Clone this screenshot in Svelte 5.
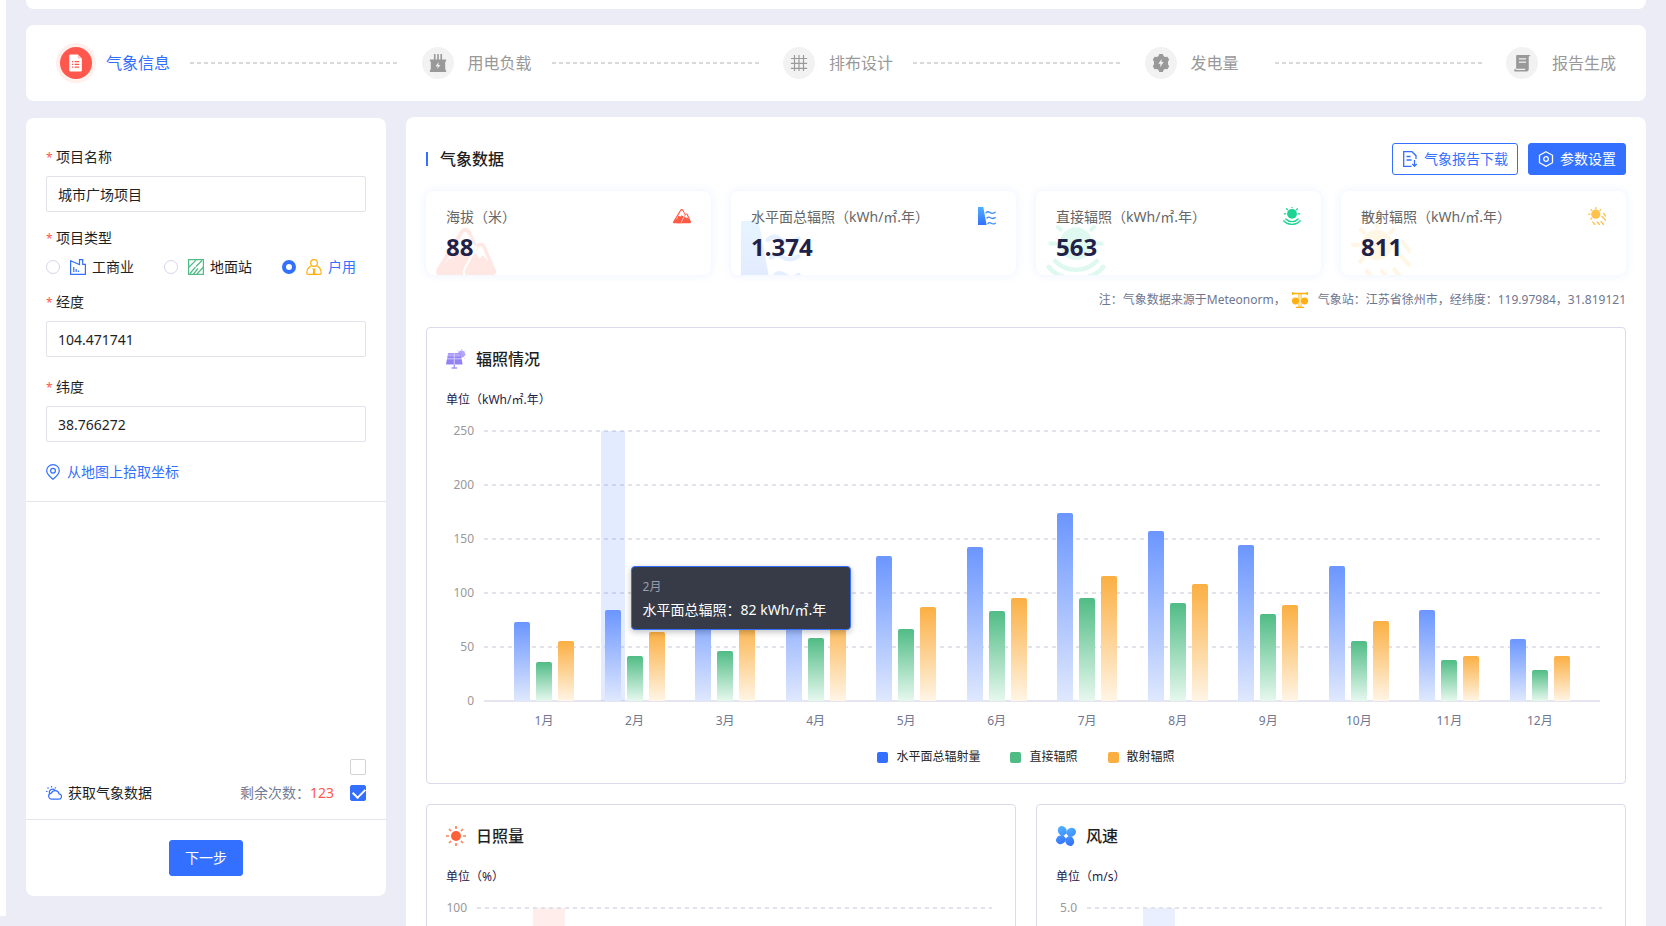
<script lang="ts">
	type Month = { label: string; total: number; direct: number; diffuse: number };

	let projectName = $state('城市广场项目');
	let projectType = $state('home');
	let longitude = $state('104.471741');
	let latitude = $state('38.766272');
	let useMap = $state(false);
	let fetchWeather = $state(true);

	const remaining = 123;
	const max = 250;

	const steps = [
		{ icon: 'doc', label: '气象信息' },
		{ icon: 'load', label: '用电负载' },
		{ icon: 'grid', label: '排布设计' },
		{ icon: 'power', label: '发电量' },
		{ icon: 'report', label: '报告生成' }
	];

	const types = [
		{ value: 'factory', label: '工商业' },
		{ value: 'ground', label: '地面站' },
		{ value: 'home', label: '户用' }
	];

	const stats = [
		{ icon: 'mountain', label: '海拔（米）', value: '88' },
		{ icon: 'dam', label: '水平面总辐照（kWh/㎡.年）', value: '1.374' },
		{ icon: 'direct', label: '直接辐照（kWh/㎡.年）', value: '563' },
		{ icon: 'diffuse', label: '散射辐照（kWh/㎡.年）', value: '811' }
	];

	const months: Month[] = [
		{ label: '1月', total: 73, direct: 36, diffuse: 56 },
		{ label: '2月', total: 84, direct: 42, diffuse: 64 },
		{ label: '3月', total: 100, direct: 46, diffuse: 75 },
		{ label: '4月', total: 118, direct: 58, diffuse: 82 },
		{ label: '5月', total: 134, direct: 67, diffuse: 87 },
		{ label: '6月', total: 143, direct: 83, diffuse: 95 },
		{ label: '7月', total: 174, direct: 95, diffuse: 116 },
		{ label: '8月', total: 157, direct: 91, diffuse: 108 },
		{ label: '9月', total: 144, direct: 81, diffuse: 89 },
		{ label: '10月', total: 125, direct: 56, diffuse: 74 },
		{ label: '11月', total: 84, direct: 38, diffuse: 42 },
		{ label: '12月', total: 57, direct: 29, diffuse: 42 }
	];

	const series = [
		{ key: 'total', label: '水平面总辐射量' },
		{ key: 'direct', label: '直接辐照' },
		{ key: 'diffuse', label: '散射辐照' }
	] as const;

	const ticks = [250, 200, 150, 100, 50, 0];

	const smallCharts = [
		{ icon: 'sun', title: '日照量', unit: '单位（%）', top: '100' },
		{ icon: 'fan', title: '风速', unit: '单位（m/s）', top: '5.0' }
	];
</script>

{#snippet stepIcon(name: string)}
	<svg viewBox="0 0 20 20" width="20" height="20" fill="currentColor" aria-hidden="true">
		{#if name === 'doc'}
			<path d="M4 .5h8l4.500 4.500v13a1.500 1.500 0 0 1-1.500 1.500H4A1.500 1.500 0 0 1 2.500 18V2A1.500 1.500 0 0 1 4 .5z" />
			<path d="M12 .5v4.500h4.500" fill="#ffc9c3" />
			<path d="M5.500 8.500h1.500M8.500 8.500h5M5.500 11.500h1.500M8.500 11.500h5M5.500 14.500h1.500M8.500 14.500h5" stroke="#ff574d" stroke-width="1.500" />
		{:else if name === 'load'}
			<path d="M5.500 0h1.800v6H5.500zM9.100 0h1.800v6H9.100zM12.700 0h1.800v6h-1.800zM1 6h18v2.200h-1v9.300h1V20H1v-2.500h1V8.200H1z" />
			<path d="M10.800 8.800l-3.500 4.800h2.400l-.7 3.200 3.700-4.700h-2.400z" fill="#f2f2f2" />
		{:else if name === 'grid'}
			<path d="M5 1v18M10 1v18M15 1v18M1 5h18M1 10.500h18M1 16h18" stroke="currentColor" stroke-width="1.300" />
		{:else if name === 'power'}
			<path d="M8 0h4l.9 2.400 1.800 1 2.500-.4 1.900 3.300-1.300 1.900v3.600l1.300 1.900-1.900 3.300-2.500-.4-1.800 1L12 20H8l-.9-2.400-1.800-1-2.500.4-1.900-3.300 1.300-1.900V8.200L.9 6.300 2.800 3l2.500.4 1.800-1z" />
			<path d="M10.800 5.600L7 10.800h2.500l-.7 3.800 4.200-5.600h-2.500z" fill="#f2f2f2" />
		{:else}
			<path d="M4.500 1H19v1.500h-1.500V17a2.500 2.500 0 0 1-2.500 2.500H1.500V17h2V2a1 1 0 0 1 1-1z" />
			<path d="M6.500 5.500h8M6.500 9h8M3.500 17h10" stroke="#f2f2f2" stroke-width="1.300" />
		{/if}
	</svg>
{/snippet}

{#snippet typeIcon(name: string)}
	<svg viewBox="0 0 16 16" width="16" height="16" fill="none" aria-hidden="true">
		{#if name === 'factory'}
			<path d="M.6 1.800L9.500 5.500V.6h3.200v4.800h2.700v10H.6z" stroke="#3370ff" stroke-width="1.200" />
			<path d="M3.800 8v5M6.200 10v3M8.500 11.500V13" stroke="#3370ff" stroke-width="1.200" />
		{:else if name === 'ground'}
			<path d="M.6.6h14.800v14.800H.6zM.6 8.500L8.500.6M2 14.500L7.500 8M8 7.500l6-6M9 15l6.400-7M5.500 15L10 9.500" stroke="#50bc85" stroke-width="1.200" />
		{:else}
			<circle cx="8" cy="4" r="3.400" stroke="#ffb011" stroke-width="1.200" />
			<path d="M5.500 6.800C2.500 8.200.8 10.800.8 14c0 .8.500 1.400 1.400 1.400h11.600c.9 0 1.400-.6 1.400-1.400 0-3.200-1.700-5.800-4.700-7.200" stroke="#ffb011" stroke-width="1.200" />
			<path d="M6 9.500h4L8.900 11l.4 4.400H6.700L7.100 11z" fill="#ffb011" />
		{/if}
	</svg>
{/snippet}

{#snippet statIcon(name: string)}
	<svg viewBox="0 0 18 18" fill="none" aria-hidden="true">
		{#if name === 'mountain'}
			<path d="M8.800 2c-.8 0-1.300.4-1.600 1L.2 14.400c-.5 1 0 1.900 1 1.900h7.300c-.5-.6-.4-1.300 0-2l3.800-7L10.400 3c-.3-.6-.8-1-1.600-1z" fill="#ff5a43" />
			<path d="M8.800 3.300c-.3 0-.5.200-.7.500L3.500 11.300l-.9 1.900L4 11l1.500 1.800.2-2 1.900.6 2-.9 1 .6L11.700 7.500 9.500 3.800c-.2-.3-.4-.5-.7-.5z" fill="#fff" />
			<path d="M4.700 9.500l1-.9 1.400 1.200 1.500-1.600 1.800 1.300.3-.6-1 7.400H4z" fill="#ff5a43" />
			<path d="M12 7.300c.6-1 2.200-1 2.800 0l3.100 7.300c.4.900-.1 1.700-1 1.700H9.700c-.9 0-1.300-.8-.9-1.700z" fill="#ff5a43" />
			<path d="M12.300 7.500L8.500 14.500c-.3.800-.3 1.300.2 1.800" stroke="#fff" stroke-width=".6" />
			<path d="M12.900 7.900c.2-.4.800-.4 1 0l1.900 4.300-1.700-2-1 1.100-1.200-1.700-1.200.9z" fill="#fff" />
		{:else if name === 'dam'}
			<path d="M0 0h5.300L8.600 18H0z" fill="url(#dam-fill)" />
			<path d="M8 5.700c1.400-1.500 2.800-1 4-.1s2.800 1.200 5.200-.4M9 11c1.200-1.400 2.400-.9 3.400-.2 1.400 1 2.900 1 4.800-.2M10 16.600c1-1.500 2.300-1 3.300-.3 1.200.8 2.600.9 4-.1" stroke="#3f8bff" stroke-width="1.300" stroke-linecap="round" />
		{:else if name === 'direct'}
			<circle cx="9" cy="6.800" r="4.900" fill="#1ed492" />
			<path d="M9 0v.5M3.600 1.800l.8.8M14.400 1.800l-.8.800M1.300 6.800h1.500M15.200 6.800h1.500" stroke="#1ed492" stroke-width="1.300" stroke-linecap="round" />
			<path d="M2.800 12c3.200 3.500 9.200 3.500 12.400 0M.8 13.800c4 4.700 12.400 4.700 16.400 0" stroke="#1ed492" stroke-width="1.400" stroke-linecap="round" />
		{:else}
			<circle cx="7.800" cy="7.200" r="4.600" fill="#ffc24f" />
			<path d="M7.800.5v1.300M3 2.600l.8.900M12.600 2.600l-.8.900M.6 7.200H2M2.800 12.200l1-1.200M15.500 6.200l2 2.800M14 9.500l3.500 3.700M4.800 15l2 2.500M9.300 15l2 2.500M13 14.500l2.500 3" stroke="#ffc24f" stroke-width="1.300" stroke-linecap="round" />
		{/if}
	</svg>
{/snippet}

{#snippet chartIcon(name: string)}
	<svg viewBox="0 0 20 20" width="20" height="20" fill="none" aria-hidden="true">
		{#if name === 'solar'}
			<circle cx="15.500" cy="5" r="3.500" fill="#b3a4f9" />
			<path d="M11.500 1.500l1 .8M15.500 0v1M19.500 1.500l-.8.800M19 5.500h1M18 9l.6.600" stroke="#c4b7fb" />
			<path d="M3 4h10.500c.6 0 1 .4 1.100 1L16.500 14.500c.1.600-.3 1-.9 1H1c-.6 0-1-.5-.9-1L2 5c.1-.6.500-1 1-1z" fill="#9282f5" />
			<path d="M2.500 4.500h11.500l.6 3H1.800z" fill="#b5a7fa" />
			<path d="M8.300 4v11.500M1 9.800h15" stroke="#d3cafd" stroke-width="1" />
			<path d="M8.300 16v2.500M5.500 19h5.600" stroke="#a494f8" stroke-width="1.400" />
		{:else if name === 'sun'}
			<circle cx="10" cy="10" r="5" fill="#ff6238" />
			<path d="M10 0v3M10 17v3M0 10h3M17 10h3M3 3l2 2M15 15l2 2M17 3l-2 2M5 15l-2 2" stroke="#ff8454" stroke-width="1.700" />
		{:else}
			<g fill="url(#fan-fill)">
				<ellipse cx="6.300" cy="4.900" rx="4.300" ry="5" transform="rotate(-25 6.300 4.900)" />
				<ellipse cx="15.100" cy="6.300" rx="5" ry="4.300" transform="rotate(-25 15.100 6.300)" />
				<ellipse cx="13.700" cy="15.100" rx="4.300" ry="5" transform="rotate(-25 13.700 15.100)" />
				<ellipse cx="4.900" cy="13.700" rx="5" ry="4.300" transform="rotate(-25 4.900 13.700)" />
			</g>
			<circle cx="10" cy="10" r="1.700" fill="#fff" />
		{/if}
	</svg>
{/snippet}

<svg class="defs" width="0" height="0" aria-hidden="true">
	<linearGradient id="dam-fill" x2="0" y2="1">
		<stop stop-color="#4fb1ff" />
		<stop offset="1" stop-color="#3370ff" />
	</linearGradient>
	<linearGradient id="fan-fill" gradientUnits="userSpaceOnUse" x1="0" y1="0" x2="0" y2="20">
		<stop stop-color="#4fb1ff" />
		<stop offset="1" stop-color="#3370ff" />
	</linearGradient>
</svg>

<div class="page">
	<div class="shell">
		<header class="topbar"></header>

		<!-- wizard steps -->
		<ol class="steps">
			{#each steps as step, i}
				<li class:active={i === 0}>
					<span class="step-icon">{@render stepIcon(step.icon)}</span>
					<span class="step-label">{step.label}</span>
				</li>
			{/each}
		</ol>

		<div class="columns">
			<form class="sidebar">
				<div class="fields">
					<label class="caption" for="name">项目名称</label>
					<input id="name" class="text" bind:value={projectName} />

					<fieldset>
						<legend class="caption">项目类型</legend>
						<div class="types">
							{#each types as type}
								<label class:checked={projectType === type.value}>
									<input type="radio" name="type" value={type.value} bind:group={projectType} />
									{@render typeIcon(type.value)}
									{type.label}
								</label>
							{/each}
						</div>
					</fieldset>

					<label class="caption" for="longitude">经度</label>
					<input id="longitude" class="text longitude" bind:value={longitude} />

					<label class="caption" for="latitude">纬度</label>
					<input id="latitude" class="text" bind:value={latitude} />

					<a class="pick" href="#map">
						<svg viewBox="0 0 14 16" width="14" height="16" fill="none" stroke="currentColor" stroke-width="1.200" aria-hidden="true">
							<path d="M7 15.300C3 12 .7 9.600.7 6.700a6.300 6.100 0 0 1 12.600 0c0 2.900-2.300 5.300-6.300 8.600z" />
							<circle cx="7" cy="6.700" r="2.400" />
						</svg>
						从地图上拾取坐标
					</a>
				</div>

				<div class="weather">
					<input type="checkbox" aria-label="地图" bind:checked={useMap} />
					<div class="weather-row">
						<label for="fetch">
							<svg viewBox="0 0 16 16" width="16" height="16" fill="none" stroke="#3370ff" stroke-width="1.200" aria-hidden="true">
								<path d="M6 14.200a3 3 0 0 1-.6-6A4 4 0 0 1 13 8.800a2.700 2.700 0 0 1-.5 5.400z" />
								<path d="M3.500 8.300A3.200 3.200 0 0 1 9 5.300M5.500 1v1.500M1.500 2.500l1 1M9.800 2.300l-.9 1M0 6.500h1.500" />
							</svg>
							获取气象数据
						</label>
						<span class="remaining">剩余次数：<b>{remaining}</b></span>
						<input id="fetch" type="checkbox" bind:checked={fetchWeather} />
					</div>
				</div>

				<div class="actions">
					<button type="button" class="primary next">下一步</button>
				</div>
			</form>

			<main>
				<div class="heading">
					<h1>气象数据</h1>
					<button type="button">
						<svg viewBox="0 0 16 16" width="16" height="16" fill="none" stroke="currentColor" stroke-width="1.300" aria-hidden="true">
							<path d="M9.500 15.300H1.700V.7H10L14 4.500V8M10 .7l4 4M4.500 5.500h4M4.500 9h5M12.500 9v6M10.300 13l2.200 2.200 2.200-2.200" />
						</svg>
						气象报告下载
					</button>
					<button type="button" class="primary">
						<svg viewBox="0 0 16 16" width="16" height="16" fill="none" stroke="currentColor" stroke-width="1.300" aria-hidden="true">
							<path d="M8 .7l6.500 3.600v7.400L8 15.300l-6.500-3.600V4.300z" />
							<circle cx="8" cy="8" r="2.300" />
						</svg>
						参数设置
					</button>
				</div>

				<div class="stats">
					{#each stats as stat}
						<section class="stat">
							<div class="watermark">{@render statIcon(stat.icon)}</div>
							<div class="stat-head">
								<h2>{stat.label}</h2>
								<div class="stat-icon">{@render statIcon(stat.icon)}</div>
							</div>
							<strong>{stat.value}</strong>
						</section>
					{/each}
				</div>

				<p class="note">
					<span>注：气象数据来源于Meteonorm，</span>
					<svg viewBox="0 0 16 16" width="16" height="16" fill="#ffb011" aria-hidden="true">
						<path d="M0 0l3 .8h10L16 0v3l-3-.8H9.500v6h2v1.500h-2v5H12V16H4v-1.300h2.500v-5h-2V8.200h2v-6H3L0 3z" />
						<circle cx="3.400" cy="9" r="3.400" />
						<circle cx="12.600" cy="9" r="3.400" />
						<path d="M8 2.500v12" stroke="#fff" stroke-width="1.300" />
					</svg>
					<span>气象站：江苏省徐州市，经纬度：119.97984，31.819121</span>
				</p>

				<section class="card">
					<h2>{@render chartIcon('solar')}辐照情况</h2>
					<p class="unit">单位（kWh/㎡.年）</p>
					<div class="chart">
						<div class="axis">
							{#each ticks as tick}
								<span>{tick}</span>
							{/each}
						</div>
						<div class="plot">
							<div class="lines">
								{#each ticks as tick}
									<i class:base={tick === 0}></i>
								{/each}
							</div>
							{#each months as month, i}
								<div class="month">
									{#if i === 1}
										<div class="highlight"></div>
									{/if}
									{#each series as s}
										<div class="bar {s.key}" style="height: {(month[s.key] / max) * 100}%"></div>
									{/each}
									{#if i === 1}
										<div class="tooltip">
											<span>{month.label}</span>
											<p>水平面总辐照：82 kWh/㎡.年</p>
										</div>
									{/if}
								</div>
							{/each}
						</div>
					</div>
					<div class="labels">
						{#each months as month}
							<span>{month.label}</span>
						{/each}
					</div>
					<ul class="legend">
						{#each series as s}
							<li class={s.key}>{s.label}</li>
						{/each}
					</ul>
				</section>

				<div class="pair">
					{#each smallCharts as chart}
						<section class="card">
							<h2>{@render chartIcon(chart.icon)}{chart.title}</h2>
							<p class="unit">{chart.unit}</p>
							<div class="chart small">
								<div class="axis"><span>{chart.top}</span></div>
								<div class="plot">
									<div class="lines"><i></i></div>
									<div class="band {chart.icon}"></div>
								</div>
							</div>
						</section>
					{/each}
				</div>
			</main>
		</div>
	</div>
</div>

<style>
	:global(body) {
		margin: 0;
		background: #ececf6;
	}

	.page {
		height: 100vh;
		box-sizing: border-box;
		padding-bottom: 10px;
		overflow: hidden;
		background: #ececf6;
		font-family: 'Noto Sans', 'Noto Sans CJK SC', sans-serif;
		font-size: 14px;
		line-height: 20px;
		color: #1f1f1f;
	}

	.page * {
		box-sizing: border-box;
	}

	.defs {
		position: absolute;
	}

	.shell {
		display: flex;
		flex-direction: column;
		height: 100%;
		padding: 0 20px;
		border-left: 6px solid #fff;
	}

	svg {
		flex: none;
		display: block;
	}

	h1,
	h2,
	p {
		margin: 0;
	}

	input,
	button {
		font: inherit;
		color: inherit;
		margin: 0;
	}

	.topbar {
		flex: none;
		height: 9px;
		background: #fff;
		border-radius: 0 0 8px 8px;
	}

	/* steps */
	.steps {
		flex: none;
		display: flex;
		align-items: center;
		list-style: none;
		height: 76px;
		margin: 16px 0;
		padding: 0 30px 0 34px;
		background: #fff;
		border-radius: 8px;
		font-size: 16px;
		color: #999;
	}

	.steps li {
		flex: 1;
		display: flex;
		align-items: center;
	}

	.steps li:last-child {
		flex: none;
	}

	.steps li:not(:last-child)::after {
		content: '';
		flex: 1;
		height: 2px;
		margin: 0 24px 0 20px;
		background: repeating-linear-gradient(90deg, #d9d9d9 0 4px, transparent 4px 7px);
	}

	.step-icon {
		display: flex;
		align-items: center;
		justify-content: center;
		width: 32px;
		height: 32px;
		margin-right: 14px;
		border-radius: 50%;
		background: #f2f2f2;
	}

	.step-icon svg {
		width: 18px;
		height: 18px;
	}

	.step-label {
		min-width: 64px;
	}

	.active {
		color: #3370ff;
	}

	.active .step-icon {
		color: #fff;
		background: #ff574d;
		box-shadow: 0 0 0 4px #ffefed;
	}

	.columns {
		flex: 1;
		min-height: 0;
		display: grid;
		grid-template-columns: 360px minmax(0, 1fr);
		grid-template-rows: minmax(0, 1fr);
		gap: 20px;
	}

	/* sidebar */
	.sidebar {
		display: flex;
		flex-direction: column;
		margin: 1px 0 20px;
		background: #fff;
		border-radius: 8px;
	}

	.fields {
		display: flex;
		flex-direction: column;
		padding: 29px 20px 19px;
		border-bottom: 1px solid #e4e4ea;
	}

	.caption {
		display: block;
		height: 20px;
		padding: 0;
	}

	.caption::before {
		content: '*';
		display: inline-block;
		width: 10px;
		font-size: 12px;
		line-height: 12px;
		color: #ff574d;
	}

	.text {
		height: 36px;
		margin: 9px 0 16px;
		padding: 0 11px;
		border: 1px solid #e2e2e9;
		border-radius: 2px;
		background: #fff;
	}

	.text.longitude {
		margin-bottom: 20px;
	}

	fieldset {
		border: 0;
		margin: 0 0 15px;
		padding: 0;
	}

	.types {
		display: flex;
		gap: 30px;
		margin-top: 9px;
	}

	.types label {
		display: flex;
		align-items: center;
		gap: 6px;
	}

	.types .checked {
		color: #3370ff;
	}

	input[type='radio'] {
		appearance: none;
		width: 14px;
		height: 14px;
		margin-right: 4px;
		border: 1px solid #d5d7ea;
		border-radius: 50%;
	}

	input[type='radio']:checked {
		border: 4px solid #3370ff;
	}

	.pick {
		display: flex;
		align-items: center;
		gap: 7px;
		margin-top: 4px;
		color: #3370ff;
		text-decoration: none;
	}

	.weather {
		flex: 1;
		display: flex;
		flex-direction: column;
		justify-content: flex-end;
		align-items: flex-end;
		gap: 8px;
		padding: 0 20px 16px;
		border-bottom: 1px solid #e4e4ea;
	}

	.weather-row {
		display: flex;
		align-items: center;
		width: 100%;
	}

	.weather-row label {
		flex: 1;
		display: flex;
		align-items: center;
		gap: 6px;
	}

	.remaining {
		margin-right: 16px;
		color: #747b94;
	}

	.remaining b {
		font-weight: 400;
		color: #ff574d;
	}

	input[type='checkbox'] {
		appearance: none;
		position: relative;
		width: 16px;
		height: 16px;
		border: 1px solid #d3d3d6;
		border-radius: 2px;
		background: #fff;
	}

	input[type='checkbox']:checked {
		border-color: #3370ff;
		background: #3370ff;
	}

	input[type='checkbox']:checked::after {
		content: '';
		position: absolute;
		left: 2px;
		top: 2px;
		width: 10px;
		height: 6px;
		border: solid #fff;
		border-width: 0 0 2px 2px;
		transform: rotate(-45deg);
	}

	.actions {
		padding: 20px;
		text-align: center;
	}

	button {
		display: inline-flex;
		align-items: center;
		gap: 6px;
		height: 32px;
		padding: 0 9px;
		border: 1px solid #3370ff;
		border-radius: 3px;
		background: #fff;
		color: #3370ff;
	}

	button.primary {
		background: #3370ff;
		color: #fff;
	}

	button.next {
		height: 36px;
		padding: 0 15px;
	}

	/* weather data */
	main {
		align-self: start;
		padding: 26px 20px 20px;
		background: #fff;
		border-radius: 8px;
	}

	.heading {
		display: flex;
		align-items: center;
		gap: 10px;
	}

	h1 {
		flex: 1;
		display: flex;
		align-items: center;
		gap: 12px;
		font-size: 16px;
		font-weight: 500;
	}

	h1::before {
		content: '';
		width: 2px;
		height: 14px;
		background: #3370ff;
	}

	.stats {
		display: grid;
		grid-template-columns: repeat(4, 1fr);
		gap: 20px;
		margin-top: 16px;
	}

	.stat {
		position: relative;
		height: 84px;
		padding: 16px 20px;
		overflow: hidden;
		border-radius: 8px;
		box-shadow: 0 0 10px rgba(51, 112, 255, 0.1);
	}

	.stat-head {
		position: relative;
		display: flex;
		justify-content: space-between;
	}

	.stat h2 {
		font-size: 14px;
		font-weight: 400;
		color: #666;
	}

	.stat-icon {
		width: 18px;
		height: 18px;
	}

	.stat strong {
		position: relative;
		display: block;
		margin-top: 5px;
		font-size: 24px;
		line-height: 30px;
		color: #1f2147;
	}

	.watermark {
		position: absolute;
		left: 10px;
		top: 30px;
		width: 60px;
		height: 60px;
		opacity: 0.14;
	}

	.note {
		display: flex;
		justify-content: flex-end;
		align-items: center;
		gap: 10px;
		margin: 15px 0 17px;
		font-size: 12px;
		color: #6f7690;
	}

	.note span:first-child {
		margin-right: -4px;
	}

	.card {
		padding: 21px 19px 16px;
		border: 1px solid #d9daea;
		border-radius: 4px;
	}

	.card h2 {
		display: flex;
		align-items: center;
		gap: 10px;
		font-size: 16px;
		font-weight: 500;
	}

	.unit {
		margin-top: 21px;
		font-size: 12px;
		color: #1f2147;
	}

	.chart {
		display: flex;
		gap: 10px;
		height: 270px;
		margin: 21px 6px 0 0;
	}

	.axis {
		display: flex;
		flex-direction: column;
		justify-content: space-between;
		width: 28px;
		margin: -9px 0;
		font-size: 12px;
		line-height: 18px;
		text-align: right;
		color: #999;
	}

	.small .axis {
		width: 21px;
	}

	.plot {
		position: relative;
		flex: 1;
		display: flex;
		justify-content: space-between;
		padding: 0 30px;
	}

	.lines {
		position: absolute;
		inset: -1px 0;
		display: flex;
		flex-direction: column;
		justify-content: space-between;
	}

	.lines i {
		height: 2px;
		background: repeating-linear-gradient(90deg, #e2e3ea 0 4px, transparent 4px 8px);
	}

	.lines .base {
		background: #e4e5ee;
	}

	.month {
		position: relative;
		display: flex;
		align-items: flex-end;
		gap: 6px;
	}

	.bar {
		position: relative;
		width: 16px;
		border-radius: 2px 2px 0 0;
	}

	.bar.total {
		background: linear-gradient(#6b96ff, #dfe8fd);
	}

	.bar.direct {
		background: linear-gradient(#50bc85, #e6f8ee);
	}

	.bar.diffuse {
		background: linear-gradient(#fbaf42, #fff5e6);
	}

	.highlight {
		position: absolute;
		left: -4px;
		top: 0;
		width: 24px;
		height: 100%;
		background: rgba(51, 112, 255, 0.14);
	}

	.tooltip {
		position: absolute;
		z-index: 1;
		left: 26px;
		bottom: 71px;
		padding: 10px 11px 9px;
		border: 1px solid #3370ff;
		border-radius: 4px;
		background: #363b47;
		box-shadow: 0 2px 6px rgba(0, 0, 0, 0.25);
		width: 220px;
		color: #fff;
		white-space: nowrap;
	}

	.tooltip span {
		display: block;
		margin-bottom: 3px;
		font-size: 12px;
		color: #9a9eae;
	}

	.labels {
		display: flex;
		justify-content: space-between;
		margin: 10px 36px 0 68px;
		font-size: 12px;
		color: #6f7690;
	}

	.labels span {
		width: 60px;
		text-align: center;
	}

	.legend {
		display: flex;
		justify-content: center;
		gap: 30px;
		list-style: none;
		margin: 16px 0 0;
		padding: 0;
		font-size: 12px;
	}

	.legend li {
		display: flex;
		align-items: center;
		gap: 8px;
	}

	.legend li::before {
		content: '';
		width: 11px;
		height: 11px;
		border-radius: 2px;
		background: #3370ff;
	}

	.legend .direct::before {
		background: #50bc85;
	}

	.legend .diffuse::before {
		background: #fbaf42;
	}

	.pair {
		display: grid;
		grid-template-columns: 1fr 1fr;
		gap: 20px;
		margin-top: 20px;
	}

	.small {
		margin-right: 4px;
	}

	.small .plot {
		padding: 0 56px;
	}

	.band {
		width: 32px;
		background: rgba(51, 112, 255, 0.11);
	}

	.band.sun {
		background: rgba(255, 87, 77, 0.11);
	}
</style>
